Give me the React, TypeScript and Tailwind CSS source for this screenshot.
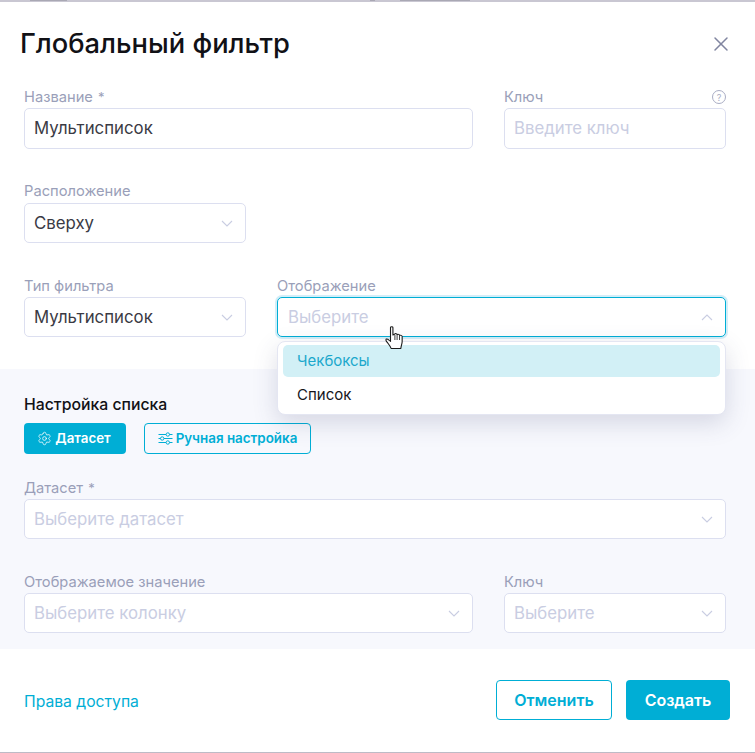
import { Settings, X } from "lucide-react";

const inputBase =
  "flex items-center justify-between rounded-[5px] border border-[#dcdff0] bg-white px-[9px] text-[16.8px] leading-none";

function Chevron({ up = false }: { up?: boolean }) {
  return (
    <svg width="12" height="7" viewBox="0 0 12 7" fill="none" className="shrink-0">
      <path
        d={up ? "M1 6 L6 1 L11 6" : "M1 1 L6 6 L11 1"}
        stroke="#c9cde2"
        strokeWidth="1.1"
      />
    </svg>
  );
}

function Label({ children, req = false }: { children: React.ReactNode; req?: boolean }) {
  return (
    <div className="h-[20px] text-[14.7px] leading-[20px] text-[#9a9fb9]">
      {children}
      {req && <span className="ml-[5px] text-[13px]">*</span>}
    </div>
  );
}

function Select({ value, placeholder, h = "h-[40px]" }: { value?: string; placeholder?: string; h?: string }) {
  return (
    <div className={`${inputBase} ${h} pr-[12px]`}>
      <span className={value ? "text-[#3a3a44]" : "text-[#c9cde2]"}>{value ?? placeholder}</span>
      <Chevron />
    </div>
  );
}

function SlidersIcon() {
  return (
    <svg width="15" height="13" viewBox="0 0 15 13" fill="none" stroke="#00aed5" strokeWidth="1">
      <path d="M0.5 2.5H8M11.5 2.5H14.5M0.5 6.5H2.5M6 6.5H14.5M0.5 10.5H8M11.5 10.5H14.5" />
      <circle cx="9.8" cy="2.5" r="1.7" />
      <circle cx="4.2" cy="6.5" r="1.7" />
      <circle cx="9.8" cy="10.5" r="1.7" />
    </svg>
  );
}

function HandCursor() {
  return (
    <svg
      width="22"
      height="24"
      viewBox="0 0 20 24"
      preserveAspectRatio="none"
      className="pointer-events-none absolute left-[108px] top-[29px] z-20"
    >
      <path
        d="M5 1.5 C5 0.5 7.2 0.5 7.2 1.5 L7.2 9 L9 8 C9.5 7.3 11 7.6 11 8.6 C11.7 8 13.2 8.3 13.2 9.4 C14 8.9 15.6 9.4 15.6 10.6 L15.6 15.5 C15.6 18 14.6 19.5 14.4 22.5 L5.6 22.5 C5 20 3.6 18.6 1.5 15.6 C0.4 14 0.8 12.6 2 13 C3 13.3 4 14.6 5 15.4 Z"
        fill="#fff"
        stroke="#1a1a1a"
        strokeWidth="1"
        strokeLinejoin="round"
      />
      <path d="M9 9 V14 M11 9 V14 M13.2 10 V14" stroke="#1a1a1a" strokeWidth="0.8" />
    </svg>
  );
}

export default function App() {
  return (
    <div className="flex h-[753px] w-[755px] flex-col overflow-hidden bg-white font-['Inter',sans-serif]">
      {/* page behind the modal peeks through on the very first row */}
      <div className="flex h-px shrink-0 bg-[#c9c7d2]">
        <span className="ml-[30px] w-[37px] bg-[#a9a8b4]" />
        <span className="ml-[303px] w-[5px] bg-[#a9a8b4]" />
        <span className="ml-[25px] w-[70px] bg-[#a9a8b4]" />
      </div>
      <div className="h-px shrink-0 bg-[#c9c7d2]" />

      <div className="flex h-[85px] shrink-0 items-start justify-between pl-[20px] pr-[22px] pt-[24px]">
        <h1 className="text-[27.3px] font-medium leading-[36px] text-[#111116]">Глобальный фильтр</h1>
        <X size={24} strokeWidth={1.5} color="#8085a0" className="mt-[6px]" />
      </div>

      <div className="flex flex-col pl-[24px] pr-[29px]">
        <div className="grid grid-cols-[449px_222px] gap-x-[31px]">
          <div>
            <Label req>Название</Label>
            <div className={`${inputBase} mt-[1px] h-[41px] text-[#3a3a44]`}>Мультисписок</div>
          </div>
          <div>
            <div className="flex items-center justify-between">
              <Label>Ключ</Label>
              <span className="flex h-[14px] w-[14px] items-center justify-center rounded-full border border-[#a9adc4] text-[9px] leading-none text-[#a9adc4]">
                ?
              </span>
            </div>
            <div className={`${inputBase} mt-[1px] h-[41px] text-[#c9cde2]`}>Введите ключ</div>
          </div>
        </div>

        <div className="mt-[32px] w-[222px]">
          <Label>Расположение</Label>
          <div className="mt-[2px]">
            <Select value="Сверху" />
          </div>
        </div>

        <div className="mt-[33px] grid grid-cols-[222px_449px] gap-x-[31px]">
          <div>
            <Label>Тип фильтра</Label>
            <div className="mt-[1px]">
              <Select value="Мультисписок" />
            </div>
          </div>
          <div>
            <Label>Отображение</Label>
            <div className="relative mt-[1px]">
              <div className="flex h-[40px] items-center justify-between rounded-[5px] border border-[#00aed5] bg-white pl-[10px] pr-[12px] text-[16.8px] leading-none text-[#c9cde2] shadow-[0_0_0_2px_#d3eef8]">
                <span>Выберите</span>
                <Chevron up />
              </div>
              <HandCursor />
              <div className="absolute left-0 right-0 top-[44px] z-10 flex h-[74px] flex-col rounded-[8px] border border-[#e4e6f2] bg-white px-[5px] pt-[3px] shadow-[0_8px_24px_rgba(60,65,110,0.18)]">
                <div className="flex h-[32px] items-center rounded-[5px] bg-[#d2f0f6] pl-[14px] text-[15px] text-[#1ba8cc]">
                  Чекбоксы
                </div>
                <div className="flex h-[36px] items-center pl-[14px] text-[15px] text-[#16161c]">Список</div>
              </div>
            </div>
          </div>
        </div>
      </div>

      <section className="mt-[32px] flex h-[280px] shrink-0 flex-col bg-[#f7f8fd] pl-[24px] pr-[29px] pt-[26px]">
        <h2 className="h-[20px] text-[15.8px] font-medium leading-[20px] text-[#111116]">Настройка списка</h2>
        <div className="mt-[8px] flex gap-[18px]">
          <button className="flex h-[31px] w-[102px] items-center justify-center gap-[3px] rounded-[4px] bg-[#00aed5] pr-[2px] text-[13.3px] font-semibold text-white">
            <Settings size={15} strokeWidth={1.2} />
            Датасет
          </button>
          <button className="flex h-[31px] w-[167px] items-center justify-center gap-[3px] rounded-[4px] border border-[#00aed5] text-[13.4px] font-semibold text-[#00aed5]">
            <SlidersIcon />
            Ручная настройка
          </button>
        </div>
        <div className="mt-[24px]">
          <Label req>Датасет</Label>
          <div className="mt-[1px]">
            <Select placeholder="Выберите датасет" />
          </div>
        </div>
        <div className="mt-[33px] grid grid-cols-[449px_222px] gap-x-[31px]">
          <div>
            <Label>Отображаемое значение</Label>
            <div className="mt-[1px]">
              <Select placeholder="Выберите колонку" />
            </div>
          </div>
          <div>
            <Label>Ключ</Label>
            <div className="mt-[1px]">
              <Select placeholder="Выберите" />
            </div>
          </div>
        </div>
      </section>

      <div className="flex flex-1 items-start justify-between pl-[24px] pr-[25px] pt-[31px]">
        <a className="mt-[12px] text-[15.7px] leading-[20px] text-[#00aed5]">Права доступа</a>
        <div className="flex gap-[14px]">
          <button className="h-[40px] w-[116px] rounded-[4px] border border-[#00aed5] bg-white text-[16px] font-semibold text-[#00aed5]">
            Отменить
          </button>
          <button className="h-[40px] w-[104px] rounded-[4px] bg-[#00aed5] text-[16px] font-semibold text-white">
            Создать
          </button>
        </div>
      </div>

      <div className="h-px shrink-0 bg-[#bdbbc6]" />
    </div>
  );
}
